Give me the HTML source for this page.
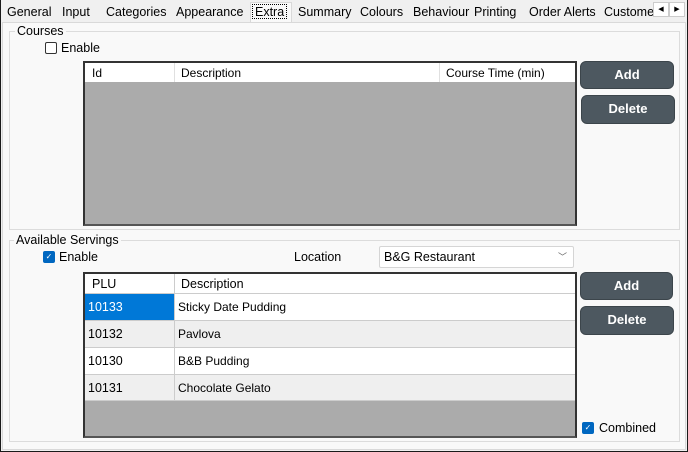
<!DOCTYPE html><html><head><style>
*{margin:0;padding:0;box-sizing:border-box}
body{width:688px;height:452px;background:#f0f0f0;font-family:"Liberation Sans",sans-serif;font-size:12px;color:#000;position:relative;overflow:hidden}
.a{position:absolute}
.tab{position:absolute;top:3px;height:19px;line-height:19px;font-size:12.5px;color:#000}
.btn{position:absolute;background:#4d5860;border:1px solid #3c454b;border-radius:6px;color:#fff;font-weight:bold;font-size:13px;text-align:center;line-height:26px}
.cell{position:absolute;font-size:12px;line-height:26px;padding-left:4px}
</style></head><body>
<div class="a" style="left:0;top:0;width:688px;height:452px;border:1px solid #1a1a1a;border-top:none"></div>
<div class="tab" style="left:7px">General</div>
<div class="tab" style="left:62px">Input</div>
<div class="tab" style="left:106px">Categories</div>
<div class="tab" style="left:176px">Appearance</div>
<div class="a" style="left:250px;top:2px;width:42px;height:21px;background:#f9f9f9;border:1px solid #d9d9d9;border-bottom:none"></div>
<div class="tab" style="left:254px;top:4px;height:15px;line-height:14px;border:1px dotted #000;padding:0 2px;left:252px">Extra</div>
<div class="tab" style="left:298px">Summary</div>
<div class="tab" style="left:360px">Colours</div>
<div class="tab" style="left:413px">Behaviour</div>
<div class="tab" style="left:474px">Printing</div>
<div class="tab" style="left:529px">Order Alerts</div>
<div class="tab" style="left:604px">Custome</div>
<div class="a" style="left:653px;top:2px;width:16px;height:15px;background:#fff;border:1px solid #ccc;font-size:7px;text-align:center;line-height:13px">◀</div>
<div class="a" style="left:669px;top:2px;width:16px;height:15px;background:#fff;border:1px solid #ccc;font-size:7px;text-align:center;line-height:13px">▶</div>
<div class="a" style="left:2px;top:22px;width:684px;height:428px;background:#f9f9f9;border:1px solid #d9d9d9"></div>

<div class="a" style="left:9px;top:31px;width:671px;height:199px;border:1px solid #dcdcdc"></div>
<div class="a" style="left:15px;top:24px;background:#f9f9f9;padding:0 2px;font-size:12.5px">Courses</div>
<div class="a" style="left:45px;top:42px;width:12px;height:12px;border:1px solid #333;border-radius:2px;background:#fff"></div>
<div class="a" style="left:61px;top:41px;font-size:12.5px">Enable</div>
<div class="a" style="left:83px;top:61px;width:494px;height:165px;background:#ababab;border:2px solid #333;border-bottom-color:#555"></div>
<div class="a" style="left:85px;top:63px;width:490px;height:19px;background:#fff"></div>
<div class="a" style="left:174px;top:63px;width:1px;height:19px;background:#e0e0e0"></div>
<div class="a" style="left:439px;top:63px;width:1px;height:19px;background:#e0e0e0"></div>
<div class="a" style="left:92px;top:66px;font-size:12px">Id</div>
<div class="a" style="left:181px;top:66px;font-size:12px">Description</div>
<div class="a" style="left:446px;top:66px;font-size:12px">Course Time (min)</div>
<div class="btn" style="left:580px;top:61px;width:94px;height:28px">Add</div>
<div class="btn" style="left:581px;top:95px;width:94px;height:29px">Delete</div>

<div class="a" style="left:9px;top:240px;width:671px;height:202px;border:1px solid #dcdcdc"></div>
<div class="a" style="left:14px;top:233px;background:#f9f9f9;padding:0 2px;font-size:12.5px">Available Servings</div>
<div class="a" style="left:43px;top:251px;width:12px;height:12px;border-radius:2px;background:#0067c0;color:#fff;font-size:8px;text-align:center;line-height:12px">✓</div>
<div class="a" style="left:59px;top:250px;font-size:12.5px">Enable</div>
<div class="a" style="left:294px;top:250px;font-size:12.5px">Location</div>
<div class="a" style="left:379px;top:246px;width:195px;height:22px;background:#fff;border:1px solid #d5d5d5;border-radius:2px;font-size:12.5px;line-height:20px;padding-left:4px">B&amp;G Restaurant<span style="position:absolute;right:6px;top:0;font-size:9px;color:#666">﹀</span></div>
<div class="a" style="left:83px;top:272px;width:494px;height:166px;background:#ababab;border:2px solid #333;border-bottom-color:#555"></div>
<div class="a" style="left:85px;top:274px;width:490px;height:19px;background:#fff"></div>
<div class="a" style="left:92px;top:277px;font-size:12.5px">PLU</div>
<div class="a" style="left:181px;top:277px;font-size:12.5px">Description</div>
<div class="a" style="left:85px;top:293px;width:490px;height:27px;background:#fff;border-top:1px solid #ccc"></div>
<div class="a" style="left:85px;top:320px;width:490px;height:27px;background:#efefef;border-top:1px solid #ccc"></div>
<div class="a" style="left:85px;top:347px;width:490px;height:27px;background:#fff;border-top:1px solid #ccc"></div>
<div class="a" style="left:85px;top:374px;width:490px;height:27px;background:#efefef;border-top:1px solid #ccc;border-bottom:1px solid #ccc"></div>
<div class="a" style="left:85px;top:294px;width:89px;height:26px;background:#0078d7"></div>
<div class="a" style="left:174px;top:274px;width:1px;height:127px;background:#ccc"></div>
<div class="cell" style="left:84px;top:294px;color:#fff;font-size:12.5px">10133</div>
<div class="cell" style="left:84px;top:321px;font-size:12.5px">10132</div>
<div class="cell" style="left:84px;top:348px;font-size:12.5px">10130</div>
<div class="cell" style="left:84px;top:375px;font-size:12.5px">10131</div>
<div class="cell" style="left:174px;top:294px">Sticky Date Pudding</div>
<div class="cell" style="left:174px;top:321px">Pavlova</div>
<div class="cell" style="left:174px;top:348px">B&amp;B Pudding</div>
<div class="cell" style="left:174px;top:375px">Chocolate Gelato</div>
<div class="btn" style="left:580px;top:272px;width:93px;height:28px">Add</div>
<div class="btn" style="left:580px;top:306px;width:94px;height:29px">Delete</div>
<div class="a" style="left:582px;top:422px;width:12px;height:12px;border-radius:2px;background:#0067c0;color:#fff;font-size:8px;text-align:center;line-height:12px">✓</div>
<div class="a" style="left:599px;top:421px;font-size:12.5px">Combined</div>
</body></html>
